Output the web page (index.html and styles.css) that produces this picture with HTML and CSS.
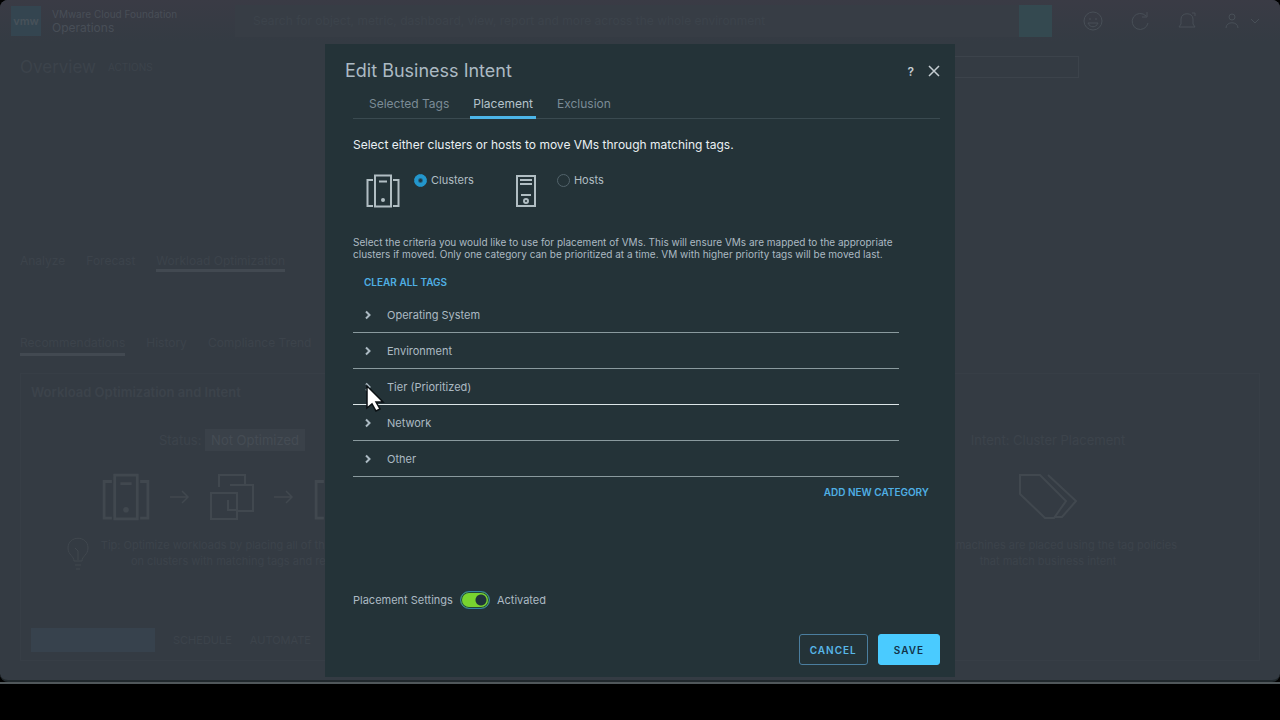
FILE: index.html
```html
<!DOCTYPE html>
<html lang="en">
<head>
  <meta charset="UTF-8" />
  <meta name="viewport" content="width=device-width, initial-scale=1.0"/>
  <title>Edit Business Intent</title>
  <link rel="stylesheet" href="styles.css">
</head>
<body>
  <svg class="defs" aria-hidden="true">
    <symbol id="cluster" viewBox="0 0 34 34">
      <path d="M9 1.500h16v31H9z M13 7.500h8 M7 6H1.500v26H7 M27 6h5.500v26H27" fill="none" stroke="currentColor" stroke-width="2"/>
      <circle cx="17" cy="26" r="2" fill="currentColor" stroke="none"/>
    </symbol>
    <symbol id="host" viewBox="0 0 22 34">
      <path d="M2 2h18v30H2z M5 6h12 M5 10h12 M6 21h10" fill="none" stroke="currentColor" stroke-width="2"/>
      <circle cx="11" cy="27" r="2" fill="none" stroke="currentColor" stroke-width="2"/>
    </symbol>
    <symbol id="chevron" viewBox="0 0 8 10">
      <path d="M2 1.500l3.500 3.500L2 8.500" fill="none" stroke="currentColor" stroke-width="2"/>
    </symbol>
    <symbol id="arrow" viewBox="0 0 20 16">
      <path d="M0 8h18 M12 2l6 6-6 6" fill="none" stroke="currentColor" stroke-width="1.500"/>
    </symbol>
  </svg>

  <div class="app">
    <div class="page" inert>
      <header class="topbar">
        <div class="logo">vmw</div>
        <div class="product">VMware Cloud Foundation<br><span>Operations</span></div>
        <div class="search">Search for object, metric, dashboard, view, report and more across the whole environment</div>
        <div class="top-icons">
          <svg width="20" height="20" viewBox="0 0 20 20"><circle cx="10" cy="10" r="9"/><path d="M6 8h2 M12 8h2 M5 12c2 5 8 5 10 0z"/></svg>
          <svg width="20" height="20" viewBox="0 0 20 20"><path d="M16 5a8 8 0 1 0 2 7 M17 1v5h-5"/></svg>
          <svg width="20" height="20" viewBox="0 0 20 20"><path d="M2 16h16l-2-3V8c0-7-12-7-12 0v5z M15 2h3v3"/></svg>
          <svg width="36" height="20" viewBox="0 0 36 20"><circle cx="8" cy="6" r="3"/><path d="M2 17c0-7 12-7 12 0 M27 8l4 4 4-4"/></svg>
        </div>
      </header>

      <div class="page-title">Overview <small>ACTIONS</small><span class="page-action"></span></div>
      <div class="summary"></div>

      <nav class="page-tabs">
        <span>Analyze</span>
        <span>Forecast</span>
        <span class="on">Workload Optimization</span>
      </nav>
      <nav class="page-tabs sub">
        <span class="on">Recommendations</span>
        <span>History</span>
        <span>Compliance Trend</span>
      </nav>

      <section class="panel">
        <div class="panel-title">Workload Optimization and Intent</div>
        <div class="columns">
          <div class="col">
            <div class="status">Status: <b>Not Optimized</b></div>
            <div class="flow">
              <svg width="48" height="48"><use href="#cluster"/></svg>
              <svg width="20" height="16"><use href="#arrow"/></svg>
              <svg width="44" height="48" viewBox="0 0 44 48"><path d="M9 14V2h26v10 M20 12h23v26H28 M1 20h26v26H1z M18 27v10h8"/></svg>
              <svg width="20" height="16"><use href="#arrow"/></svg>
              <svg width="48" height="48"><use href="#cluster"/></svg>
            </div>
            <div class="tip">
              <svg width="22" height="34" viewBox="0 0 22 34"><path d="M7 24c0-5-6-6-6-13C1-2 21-2 21 11c0 7-6 8-6 13z M8 28h6 M9 32h4 M11 23v-9l-3-3"/></svg>
              <p>Tip: Optimize workloads by placing all of the tagged VMs<br>on clusters with matching tags and resources</p>
            </div>
          </div>
          <div class="col right">
            <div class="status">Intent: Cluster Placement</div>
            <div class="flow">
              <svg width="60" height="48" viewBox="0 0 60 48"><path d="M2 2h20l26 26-12 17h-9L2 21z M30 2l28 26-14 16h-8"/></svg>
            </div>
            <p>Virtual machines are placed using the tag policies<br>that match business intent</p>
          </div>
        </div>
        <div class="panel-actions"><span class="fill"></span><span>SCHEDULE</span><span>AUTOMATE</span></div>
      </section>
    </div>

    <div class="overlay">
      <div class="modal" role="dialog" aria-labelledby="modal-title">
        <header class="modal-header">
          <h1 id="modal-title">Edit Business Intent</h1>
          <button class="icon-btn help" aria-label="Help">?</button>
          <button class="icon-btn" aria-label="Close">
            <svg width="12" height="12" viewBox="0 0 12 12"><path d="M1 1l10 10 M11 1L1 11" stroke="currentColor" stroke-width="1.500"/></svg>
          </button>
        </header>

        <div class="tabs" role="tablist">
          <button role="tab">Selected Tags</button>
          <button role="tab" class="active" aria-selected="true">Placement</button>
          <button role="tab">Exclusion</button>
        </div>

        <div class="content">
          <p class="lead">Select either clusters or hosts to move VMs through matching tags.</p>

          <div class="targets">
            <svg width="34" height="34"><use href="#cluster"/></svg>
            <label for="clusters"><input type="radio" name="target" id="clusters" checked>Clusters</label>
            <svg class="host-icon" width="22" height="34"><use href="#host"/></svg>
            <label for="hosts"><input type="radio" name="target" id="hosts">Hosts</label>
          </div>

          <p class="note">Select the criteria you would like to use for placement of VMs. This will ensure VMs are mapped to the appropriate clusters if moved. Only one category can be prioritized at a time. VM with higher priority tags will be moved last.</p>

          <button class="link-btn">CLEAR ALL TAGS</button>

          <div class="categories">
            <button aria-expanded="false"><svg width="8" height="10"><use href="#chevron"/></svg>Operating System</button>
            <button aria-expanded="false"><svg width="8" height="10"><use href="#chevron"/></svg>Environment</button>
            <button aria-expanded="false" class="hover"><svg width="8" height="10"><use href="#chevron"/></svg>Tier (Prioritized)
              <svg class="pointer" width="20" height="30" viewBox="0 0 20 30"><path d="M2 2v22l5-4 4 7 4-2-4-7h7z" fill="#fff" stroke="#0b1114" stroke-width="1.500"/></svg>
            </button>
            <button aria-expanded="false"><svg width="8" height="10"><use href="#chevron"/></svg>Network</button>
            <button aria-expanded="false"><svg width="8" height="10"><use href="#chevron"/></svg>Other</button>
          </div>

          <button class="link-btn add">ADD NEW CATEGORY</button>
        </div>

        <div class="settings">
          <label for="placement">Placement Settings</label>
          <input type="checkbox" class="toggle" id="placement" checked>
          <span>Activated</span>
        </div>

        <footer class="modal-footer">
          <button class="btn">CANCEL</button>
          <button class="btn primary">SAVE</button>
        </footer>
      </div>
    </div>
  </div>
  <div class="strip"></div>
</body>
</html>
```
FILE: styles.css
```css
* {
  box-sizing: border-box;
}
body {
  margin: 0;
  min-height: 100vh;
  display: flex;
  flex-direction: column;
  background: #000;
  font-family: Inter, "Liberation Sans", sans-serif;
  font-size: 11px;
}
p, h1 {
  margin: 0;
}
button {
  font-family: inherit;
  background: none;
  border: 0;
  padding: 0;
}
svg {
  flex: none;
}
.defs {
  position: absolute;
  width: 0;
  height: 0;
}
.app {
  flex: 1;
  position: relative;
  overflow: hidden;
  background: #343b43;
  border-radius: 8px;
  border-bottom: 2px solid #20282c;
}
.strip {
  height: 38px;
  border-top: 2px solid #50575a;
}

/* dimmed page behind the dialog */
.page {
  color: #3c434b;
  padding: 0 20px;
}
.page svg {
  fill: none;
  stroke: #41484f;
  stroke-width: 2;
  color: #41484f;
}
.topbar {
  display: flex;
  align-items: center;
  height: 42px;
  margin: 0 -20px;
  padding: 0 20px 0 11px;
  background: linear-gradient(#3a3b45, #343b43);
}
.logo {
  width: 30px;
  height: 30px;
  line-height: 30px;
  text-align: center;
  font-weight: 600;
  color: #48525a;
  background: #344550;
}
.product {
  width: 183px;
  margin-left: 11px;
  font-size: 10px;
  line-height: 13px;
  color: #484e57;
}
.product span {
  font-size: 12px;
}
.search {
  flex: 1;
  height: 32px;
  line-height: 32px;
  padding-left: 18px;
  font-size: 12px;
  background: #373d45;
  border-right: 33px solid #344950;
}
.top-icons {
  display: flex;
  gap: 27px;
  margin-left: 31px;
}
.top-icons svg {
  stroke: #484f57;
  stroke-width: 1;
}
.page-title {
  display: flex;
  align-items: center;
  gap: 12px;
  height: 50px;
  font-size: 17px;
}
.page-title small {
  font-size: 10px;
}
.page-action {
  width: 160px;
  height: 22px;
  margin: 0 181px 0 auto;
  border: 1px solid #3c434b;
}
.summary {
  height: 160px;
}
.page-tabs {
  display: flex;
  gap: 21px;
  height: 20px;
  font-size: 12px;
  line-height: 18px;
}
.page-tabs.sub {
  margin: 62px 0 17px;
  height: 22px;
}
.page-tabs .on {
  border-bottom: 3px solid #424951;
}
.panel {
  border: 1px solid #373e46;
  padding: 8px 10px;
}
.panel-title {
  font-size: 13px;
  line-height: 20px;
  font-weight: 600;
}
.columns {
  display: flex;
  justify-content: space-between;
}
.col {
  width: 33%;
  padding-top: 27px;
  text-align: center;
}
.status {
  line-height: 22px;
  font-size: 13px;
}
.status b {
  display: inline-block;
  padding: 0 6px;
  background: #3a4149;
  font-weight: 400;
  color: #454c54;
}
.flow {
  display: flex;
  justify-content: center;
  align-items: center;
  gap: 20px;
  margin: 22px 0 16px;
}
.col p {
  line-height: 16px;
}
.tip {
  display: flex;
  justify-content: center;
  gap: 12px;
}
.tip svg {
  stroke-width: 1;
}
.panel-actions {
  display: flex;
  align-items: center;
  gap: 18px;
  margin-top: 57px;
}
.panel-actions .fill {
  width: 124px;
  height: 24px;
  background: #37424d;
}

.overlay {
  position: absolute;
  inset: 44px 0 auto;
  display: flex;
  justify-content: center;
}
.modal {
  width: 630px;
  padding: 17px 15px 12px 20px;
  background: #243338;
  color: #acbac3;
}
.modal-header {
  display: flex;
  align-items: center;
  gap: 14px;
}
.modal-header h1 {
  flex: 1;
  font-size: 18px;
  line-height: 20px;
  font-weight: 400;
}
.icon-btn {
  display: flex;
  color: #c5cdd2;
}
.icon-btn.help {
  font-size: 12px;
  font-weight: 600;
}
.tabs {
  display: flex;
  gap: 18px;
  margin: 11px 0 0 8px;
  padding-left: 13px;
  border-bottom: 1px solid #3a4a50;
}
.tabs button {
  height: 27px;
  margin-bottom: -1px;
  padding: 0 3px 2px;
  font-size: 12px;
  color: #7b8b96;
  border-bottom: 3px solid transparent;
}
.tabs .active {
  color: #b5c3cc;
  border-color: #4cb5e8;
}
.content {
  padding: 16px 11px 0 8px;
}
.lead {
  font-size: 12px;
  line-height: 20px;
  color: #eaf0f3;
}
.targets {
  display: flex;
  align-items: flex-start;
  margin: 19px 0 28px;
  padding-left: 13px;
  color: #b1bec3;
}
.targets label {
  display: flex;
  align-items: center;
  gap: 4px;
  margin-left: 14px;
  line-height: 13px;
}
.targets .host-icon {
  margin-left: 41px;
}
.targets .host-icon + label {
  margin-left: 20px;
}
input[type="radio"] {
  appearance: none;
  width: 13px;
  height: 13px;
  margin: 0;
  border: 1px solid #52636b;
  border-radius: 50%;
}
input[type="radio"]:checked {
  border-color: #2397cd;
  background: radial-gradient(circle, #203744 0 1px, #2397cd 3px);
}
.note {
  font-size: 10px;
  line-height: 12px;
}
.link-btn {
  display: block;
  margin: 15px 0 0 11px;
  font-size: 10px;
  line-height: 14px;
  font-weight: 600;
  color: #4fafe4;
}
.link-btn.add {
  margin: 8px 0 0 auto;
}
.categories {
  margin: 8px 30px 0 0;
}
.categories button {
  position: relative;
  display: flex;
  align-items: center;
  gap: 15px;
  width: 100%;
  height: 36px;
  padding-left: 11px;
  font-size: 11px;
  color: #acbac3;
  border-bottom: 1px solid #8a9a9e;
}
.categories .hover {
  border-color: #dce5e7;
}
.categories .pointer {
  position: absolute;
  left: 12px;
  top: 15px;
  z-index: 1;
}
.settings {
  display: flex;
  align-items: center;
  gap: 7px;
  margin: 92px 0 0 8px;
}
.toggle {
  appearance: none;
  width: 30px;
  height: 18px;
  margin: 0;
  border: 1px solid #3587a0;
  border-radius: 9px;
  box-shadow: inset 0 0 0 1px #24483b;
  background: radial-gradient(circle at 20px 8px, #20343a 5px, #78d52f 6px);
}
.modal-footer {
  display: flex;
  justify-content: flex-end;
  gap: 10px;
  margin-top: 25px;
}
.btn {
  height: 31px;
  padding: 0 10px;
  font-size: 10px;
  font-weight: 600;
  letter-spacing: 1px;
  color: #58b7e8;
  border: 1px solid #4b7e9f;
  border-radius: 3px;
}
.btn.primary {
  padding: 0 15px;
  color: #12334a;
  background: #4acbff;
  border-color: #4acbff;
}
```
